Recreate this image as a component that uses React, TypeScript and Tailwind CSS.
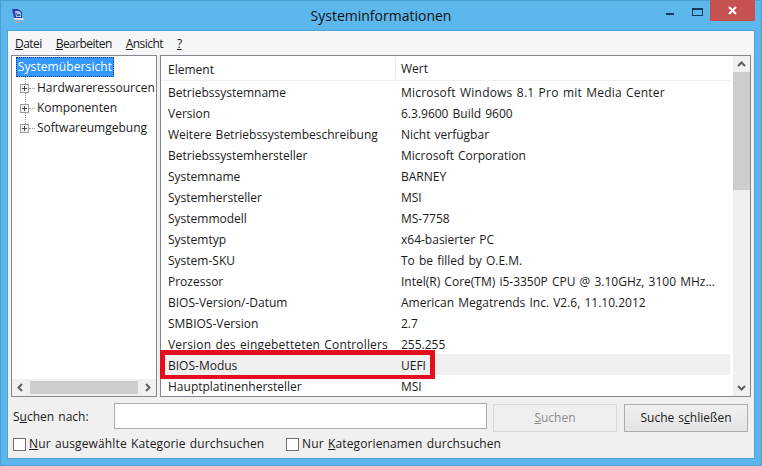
const rows: [string, string, string?, string?][] = [
  ['Betriebssystemname', 'Microsoft Windows 8.1 Pro mit Media Center', '', 'tracking-[0.2px]'],
  ['Version', '6.3.9600 Build 9600'],
  ['Weitere Betriebssystembeschreibung', 'Nicht verfügbar'],
  ['Betriebssystemhersteller', 'Microsoft Corporation'],
  ['Systemname', 'BARNEY'],
  ['Systemhersteller', 'MSI'],
  ['Systemmodell', 'MS-7758'],
  ['Systemtyp', 'x64-basierter PC'],
  ['System-SKU', 'To be filled by O.E.M.'],
  ['Prozessor', 'Intel(R) Core(TM) i5-3350P CPU @ 3.10GHz, 3100 MHz...'],
  ['BIOS-Version/-Datum', 'American Megatrends Inc. V2.6, 11.10.2012'],
  ['SMBIOS-Version', '2.7'],
  ['Version des eingebetteten Controllers', '255.255', 'tracking-[0.15px]'],
  ['BIOS-Modus', 'UEFI'],
  ['Hauptplatinenhersteller', 'MSI'],
];

function Chevron({ dir }: { dir: 'up' | 'down' | 'left' | 'right' }) {
  const points = {
    up: '1,6 4.5,2.5 8,6',
    down: '1,3 4.5,6.5 8,3',
    left: '6,1 2.5,4.5 6,8',
    right: '3,1 6.5,4.5 3,8',
  }[dir];
  return (
    <svg width="9" height="9" viewBox="0 0 9 9" className="shrink-0">
      <polyline points={points} fill="none" stroke="#606060" strokeWidth="2" />
    </svg>
  );
}

function AppIcon() {
  return (
    <svg width="14" height="16" viewBox="0 0 14 16" className="mt-[1px]">
      <path d="M1 1h6l4 3v6H3z" fill="#2f3fa8" />
      <path d="M4 3h4l2 2v4H5z" fill="#a9c8f0" />
      <path d="M5 5l2 3 1-2 1 2" fill="none" stroke="#2a3590" strokeWidth="1" />
      <path d="M2 10h10l1 2H4z" fill="#dfe2ea" />
      <path d="M5 13h5v2H5z" fill="#a3aab6" />
    </svg>
  );
}

function TreeNode({ label }: { label: string }) {
  return (
    <div className="flex h-5 items-center">
      <span className="flex h-[9px] w-[9px] shrink-0 items-center justify-center border border-[#9a9a9a] bg-[#f4f4f4]">
        <svg width="7" height="7" viewBox="0 0 7 7">
          <path d="M1 3.5h5M3.5 1v5" stroke="#444" strokeWidth="1" />
        </svg>
      </span>
      <span className="w-[6px] shrink-0 border-t border-dotted border-[#999]" />
      <span className="ml-[2px] whitespace-nowrap">{label}</span>
    </div>
  );
}

export default function App() {
  return (
    <div className="flex h-[466px] w-[762px] flex-col overflow-hidden bg-[#5cb8ec] font-['Open_Sans',sans-serif] text-[12px] text-[#1a1a1a] [word-spacing:1px] shadow-[inset_0_0_0_1px_#4a9fd4]">
      {/* Title bar */}
      <div className="relative flex h-[31px] shrink-0 items-center justify-between pl-[11px] pr-[7px]">
        <AppIcon />
        <span className="absolute inset-x-0 top-[6px] text-center text-[14px] leading-5 text-[#111] [word-spacing:0]">
          Systeminformationen
        </span>
        <div className="z-10 flex h-[21px] items-start self-start">
          <div className="flex h-[21px] w-[26px] items-start justify-center pt-[13px]">
            <span className="h-[2px] w-[8px] bg-[#17375e]" />
          </div>
          <div className="ml-px flex h-[21px] w-[26px] items-start justify-center pt-[8px]">
            <span className="h-[8px] w-[11px] border border-t-2 border-[#17375e]" />
          </div>
          <div className="flex h-[21px] w-[45px] items-center justify-center bg-[#c75050]">
            <svg width="9" height="9" viewBox="0 0 9 9">
              <path d="M1 1l7 7M8 1l-7 7" stroke="#fff" strokeWidth="2" />
            </svg>
          </div>
        </div>
      </div>

      {/* Client area */}
      <div className="mx-2 flex h-[427px] shrink-0 flex-col bg-[#f0f0f0] shadow-[0_0_0_1px_#4fa3d8]">
        <div className="flex h-[24px] shrink-0 items-center gap-[14px] bg-[#f5f6f7] pl-[7px] pt-[2px] tracking-[-0.55px]">
          <span><u>D</u>atei</span>
          <span><u>B</u>earbeiten</span>
          <span><u>A</u>nsicht</span>
          <span><u>?</u></span>
        </div>

        <div className="flex h-[342px] shrink-0 gap-[3px] pl-[3px] pr-[3px]">
          {/* Category tree */}
          <div className="flex w-[146px] flex-col border border-[#828790] bg-white">
            <div className="relative flex-1 overflow-hidden pl-[4px] pt-px">
              <div className="flex h-[20px] w-[98px] items-center justify-center border border-dotted border-[#1a3a6a] bg-[#3399ff] tracking-[0.1px] text-white">
                Systemübersicht
              </div>
              {/* Dotted guide joining the tree nodes */}
              <span className="absolute left-[13px] top-[21px] h-[47px] border-l border-dotted border-[#999]" />
              <div className="relative pl-[4px] pt-px">
                <TreeNode label="Hardwareressourcen" />
                <TreeNode label="Komponenten" />
                <TreeNode label="Softwareumgebung" />
              </div>
            </div>
            <div className="flex h-[17px] shrink-0 items-center justify-between bg-[#f0f0f0] px-[4px]">
              <Chevron dir="left" />
              <div className="mx-[5px] h-[13px] flex-1 bg-[#cdcdcd]" />
              <Chevron dir="right" />
            </div>
          </div>

          {/* Detail list */}
          <div className="relative flex min-w-0 flex-1 border border-[#828790] bg-white">
            <div className="mr-[3px] min-w-0 flex-1 overflow-hidden">
              <div className="flex h-[25px] items-center border-b border-[#eeeeee]">
                <div className="h-full w-[235px] border-r border-[#eeeeee] pl-[7px] leading-[27px]">Element</div>
                <div className="pl-[5px] pt-[2px]">Wert</div>
              </div>
              {rows.map(([name, value, nameClass, valueClass]) => (
                <div
                  key={name}
                  className={`flex h-[21px] items-center whitespace-nowrap pt-[2px] ${name === 'BIOS-Modus' ? 'bg-[#f0f0f0]' : ''}`}
                >
                  <div className={`w-[235px] pl-[7px] ${nameClass ?? ''}`}>{name}</div>
                  <div className={`pl-[5px] ${valueClass ?? ''}`}>{value}</div>
                </div>
              ))}
            </div>
            <div className="flex w-[17px] shrink-0 flex-col items-center justify-between bg-[#f0f0f0] py-[4px]">
              <div className="flex w-full flex-col items-center">
                <Chevron dir="up" />
                <div className="mt-[3px] h-[118px] w-full bg-[#cdcdcd]" />
              </div>
              <Chevron dir="down" />
            </div>
            {/* Highlight frame around the BIOS mode row */}
            <div className="absolute left-[-1px] top-[294px] h-[29px] w-[275px] border-[5px] border-b-4 border-[#e30f1f]" />
          </div>
        </div>

        {/* Search row */}
        <div className="mt-[6px] flex h-[29px] shrink-0 items-start pl-[5px]">
          <span className="w-[101px] pt-[5px]">S<u>u</u>chen nach:</span>
          <div className="h-[26px] w-[373px] border border-[#ababab] bg-white" />
          <div className="ml-[6px] mt-px flex h-[28px] w-[124px] items-center justify-center border border-[#d9d9d9] bg-[#efefef] text-[#8a8a8a]">
            <span><u>S</u>uchen</span>
          </div>
          <div className="ml-[7px] mt-px flex h-[28px] w-[124px] items-center justify-center border border-[#acacac] bg-gradient-to-b from-[#f0f0f0] to-[#e5e5e5]">
            <span>Suche s<u>c</u>hließen</span>
          </div>
        </div>

        {/* Search options */}
        <div className="flex h-[24px] items-center pl-[5px] tracking-[0.13px]">
          <label className="flex w-[273px] items-center">
            <span className="h-[13px] w-[13px] border border-[#707070] bg-white" />
            <span className="ml-[3px]"><u>N</u>ur ausgewählte Kategorie durchsuchen</span>
          </label>
          <label className="flex items-center">
            <span className="h-[13px] w-[13px] border border-[#707070] bg-white" />
            <span className="ml-[3px]">Nur <u>K</u>ategorienamen durchsuchen</span>
          </label>
        </div>
      </div>
    </div>
  );
}
